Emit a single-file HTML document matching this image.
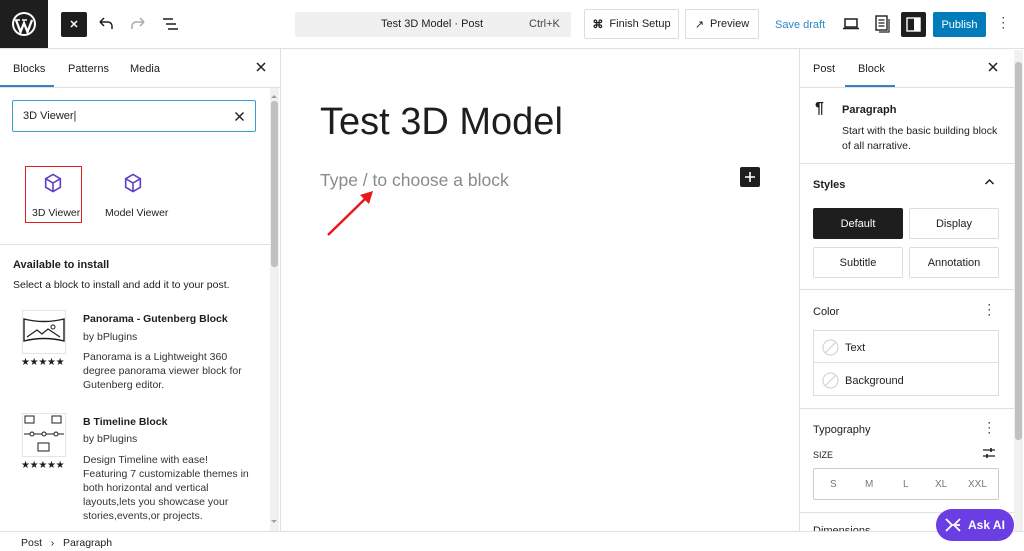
<!DOCTYPE html>
<html><head><meta charset="utf-8"><style>
*{box-sizing:border-box;margin:0;padding:0}
body{width:1024px;height:551px;overflow:hidden;background:#fff;font-family:"Liberation Sans",sans-serif;color:#1e1e1e;font-size:11px;position:relative}
.a{position:absolute}
.btn{position:absolute;border:1px solid #ddd;border-radius:2px;display:flex;align-items:center;justify-content:center;font-size:11px;color:#1e1e1e}
.hr{position:absolute;height:1px;background:#e0e0e0}
.b{font-weight:bold}
svg{position:absolute}
</style></head><body>
<!-- top bar -->
<div class="a" style="left:0;top:0;width:48px;height:48px;background:#1e1e1e"></div>
<svg style="left:11px;top:11px" width="26" height="26" viewBox="0 0 26 26"><circle cx="13" cy="13" r="12" fill="#fff"/><circle cx="13" cy="13" r="10" fill="#1e1e1e"/><path d="M5 9 L9.5 21 L13 12 L16.5 21 L21 9" stroke="#fff" stroke-width="2.3" fill="none"/><path d="M4 9h5M11 9h5" stroke="#fff" stroke-width="1.5"/></svg>
<div class="a" style="left:61px;top:12px;width:26px;height:25px;background:#1e1e1e;border-radius:2px"></div>
<svg style="left:67px;top:17px" width="14" height="14"><path d="M4 4l6 6M10 4l-6 6" stroke="#fff" stroke-width="1.5"/></svg>
<svg style="left:97px;top:16px" width="18" height="16"><path d="M3 6h8a4 4 0 0 1 4 4v3M3 6l4-4M3 6l4 4" stroke="#1e1e1e" stroke-width="1.5" fill="none"/></svg>
<svg style="left:129px;top:16px" width="18" height="16"><path d="M15 6H7a4 4 0 0 0-4 4v3M15 6l-4-4M15 6l-4 4" stroke="#aaa" stroke-width="1.5" fill="none"/></svg>
<svg style="left:162px;top:16px" width="18" height="16"><path d="M1 3h10M4 8h10M6 13h10" stroke="#1e1e1e" stroke-width="1.5"/></svg>
<div class="a" style="left:295px;top:12px;width:276px;height:25px;background:#f0f0f0;border-radius:2px"></div>
<div class="a" style="left:381px;top:18px;font-size:11px">Test 3D Model · Post</div>
<div class="a" style="left:529px;top:18px;font-size:11px;color:#444">Ctrl+K</div>
<div class="btn" style="left:584px;top:9px;width:95px;height:30px"><span style="font-weight:bold;margin-right:6px">⌘</span>Finish Setup</div>
<div class="btn" style="left:685px;top:9px;width:74px;height:30px"><span style="margin-right:6px">↗</span>Preview</div>
<div class="a" style="left:775px;top:19px;color:#2a8ac6">Save draft</div>
<svg style="left:842px;top:17px" width="18" height="14"><rect x="3" y="2" width="12" height="8" fill="none" stroke="#1e1e1e" stroke-width="1.5"/><path d="M1 11.5h16" stroke="#1e1e1e" stroke-width="1.5"/></svg>
<svg style="left:874px;top:14px" width="18" height="20"><rect x="2" y="2" width="11" height="14" fill="none" stroke="#1e1e1e" stroke-width="1.4"/><path d="M4.5 6h6M4.5 9h6M4.5 12h6M15 5v13H5" stroke="#1e1e1e" stroke-width="1.2" fill="none"/></svg>
<div class="a" style="left:901px;top:12px;width:25px;height:25px;background:#1e1e1e;border-radius:2px"></div>
<svg style="left:905px;top:16px" width="17" height="17"><rect x="2" y="2" width="13" height="13" fill="none" stroke="#fff" stroke-width="1.4"/><rect x="9" y="2" width="6" height="13" fill="#fff"/></svg>
<div class="a" style="left:933px;top:12px;width:53px;height:25px;background:#007cba;border-radius:2px;color:#fff;display:flex;align-items:center;justify-content:center">Publish</div>
<div class="a" style="left:1002px;top:16px;width:3px;line-height:5px;font-size:9px;font-weight:bold">·<br>·<br>·</div>
<div class="hr" style="left:0;top:48px;width:1024px"></div>
<!-- left panel -->
<div class="a" style="left:280px;top:48px;width:1px;height:483px;background:#e0e0e0"></div>
<div class="a" style="left:13px;top:63px">Blocks</div>
<div class="a" style="left:68px;top:63px">Patterns</div>
<div class="a" style="left:130px;top:63px">Media</div>
<div class="a" style="left:0;top:85px;width:54px;height:2px;background:#3582c4"></div>
<svg style="left:255px;top:61px" width="12" height="12"><path d="M2 2l8 8M10 2l-8 8" stroke="#1e1e1e" stroke-width="1.5"/></svg>
<div class="hr" style="left:0;top:87px;width:280px"></div>
<div class="a" style="left:270px;top:88px;width:9px;height:443px;background:#f1f1f1"></div>
<div class="a" style="left:271px;top:101px;width:7px;height:166px;background:#c1c1c1;border-radius:3px"></div>
<div class="a" style="left:271px;top:92px;width:0;height:0;border:3.5px solid transparent;border-bottom-color:#a0a0a0"></div>
<div class="a" style="left:271px;top:520px;width:0;height:0;border:3.5px solid transparent;border-top-color:#a0a0a0"></div>
<div class="a" style="left:12px;top:100px;width:244px;height:32px;border:1.5px solid #3a9bd5;border-radius:2px"></div>
<div class="a" style="left:23px;top:110px">3D Viewer|</div>
<svg style="left:234px;top:111px" width="11" height="11"><path d="M1.5 1.5l8 8M9.5 1.5l-8 8" stroke="#1e1e1e" stroke-width="1.4"/></svg>
<div class="a" style="left:25px;top:166px;width:57px;height:57px;border:1.5px solid #e01e1e"></div>
<svg style="left:42px;top:172px" width="22" height="22" viewBox="0 0 18 18"><path d="M9 2l6 3.5v7L9 16l-6-3.5v-7z M3 5.5L9 9l6-3.5M9 9v7" fill="none" stroke="#5b3ec8" stroke-width="1.3"/></svg>
<svg style="left:122px;top:172px" width="22" height="22" viewBox="0 0 18 18"><path d="M9 2l6 3.5v7L9 16l-6-3.5v-7z M3 5.5L9 9l6-3.5M9 9v7" fill="none" stroke="#5b3ec8" stroke-width="1.3"/></svg>
<div class="a" style="left:32px;top:207px;font-size:10.5px">3D Viewer</div>
<div class="a" style="left:105px;top:207px;font-size:10.5px">Model Viewer</div>
<div class="hr" style="left:0;top:244px;width:270px"></div>
<div class="a b" style="left:13px;top:259px">Available to install</div>
<div class="a" style="left:13px;top:279px;font-size:10.5px">Select a block to install and add it to your post.</div>
<div class="a" style="left:22px;top:310px;width:44px;height:44px;border:1px solid #e5e5e5"></div>
<svg style="left:22px;top:310px" width="44" height="44"><path d="M2 9q20 5 40 0v22q-20-5-40 0z" fill="none" stroke="#1e1e1e" stroke-width="1.4"/><path d="M5 27l10-7 5 4 6-5 12 8" fill="none" stroke="#1e1e1e" stroke-width="1.2"/><circle cx="31" cy="17" r="2" fill="none" stroke="#1e1e1e"/></svg>
<div class="a" style="left:21px;top:357px;font-size:10px;letter-spacing:-0.3px">★★★★★</div>
<div class="a b" style="left:83px;top:313px;font-size:10.5px">Panorama - Gutenberg Block</div>
<div class="a" style="left:83px;top:331px;font-size:10.5px;color:#333">by bPlugins</div>
<div class="a" style="left:83px;top:350px;font-size:10.5px;line-height:14px;color:#333;width:160px">Panorama is a Lightweight 360 degree panorama viewer block for Gutenberg editor.</div>
<div class="a" style="left:22px;top:413px;width:44px;height:44px;border:1px solid #e5e5e5"></div>
<svg style="left:22px;top:413px" width="44" height="44"><rect x="3" y="3" width="9" height="7" fill="none" stroke="#1e1e1e"/><rect x="30" y="3" width="9" height="7" fill="none" stroke="#1e1e1e"/><path d="M2 21h40" stroke="#1e1e1e"/><circle cx="10" cy="21" r="2" fill="#fff" stroke="#1e1e1e"/><circle cx="22" cy="21" r="2" fill="#fff" stroke="#1e1e1e"/><circle cx="34" cy="21" r="2" fill="#fff" stroke="#1e1e1e"/><rect x="16" y="30" width="11" height="8" fill="none" stroke="#1e1e1e"/></svg>
<div class="a" style="left:21px;top:460px;font-size:10px;letter-spacing:-0.3px">★★★★★</div>
<div class="a b" style="left:83px;top:416px;font-size:10.5px">B Timeline Block</div>
<div class="a" style="left:83px;top:433px;font-size:10.5px;color:#333">by bPlugins</div>
<div class="a" style="left:83px;top:453px;font-size:10.5px;line-height:14px;color:#333;width:170px">Design Timeline with ease! Featuring 7 customizable themes in both horizontal and vertical layouts,lets you showcase your stories,events,or projects.</div>
<!-- status -->
<div class="hr" style="left:0;top:531px;width:1024px"></div>
<div class="a" style="left:21px;top:537px;font-size:10.5px">Post &nbsp;&nbsp;›&nbsp;&nbsp; Paragraph</div>
<!-- editor -->
<div class="a" style="left:320px;top:101px;font-size:38px;color:#1e1e1e">Test 3D Model</div>
<div class="a" style="left:320px;top:170px;font-size:17.5px;color:#8a8a8a">Type / to choose a block</div>
<div class="a" style="left:740px;top:167px;width:20px;height:20px;background:#1e1e1e;border-radius:2px"></div>
<svg style="left:740px;top:167px" width="20" height="20"><path d="M10 5v10M5 10h10" stroke="#fff" stroke-width="1.6"/></svg>
<svg style="left:320px;top:185px" width="60" height="60"><path d="M8 50L47 12" stroke="#e8191b" stroke-width="2.5"/><path d="M53 6l-13 4 9 9z" fill="#e8191b"/></svg>
<!-- right panel -->
<div class="a" style="left:799px;top:48px;width:1px;height:483px;background:#e0e0e0"></div>
<div class="a" style="left:813px;top:63px">Post</div>
<div class="a" style="left:858px;top:63px">Block</div>
<div class="a" style="left:845px;top:85px;width:50px;height:2px;background:#3582c4"></div>
<svg style="left:987px;top:61px" width="12" height="12"><path d="M2 2l8 8M10 2l-8 8" stroke="#1e1e1e" stroke-width="1.5"/></svg>
<div class="hr" style="left:800px;top:87px;width:214px"></div>
<div class="a" style="left:1014px;top:50px;width:9px;height:481px;background:#f1f1f1"></div>
<div class="a" style="left:1015px;top:62px;width:7px;height:378px;background:#c1c1c1;border-radius:3px"></div>
<div class="a" style="left:815px;top:100px;font-size:16px;font-weight:bold">¶</div>
<div class="a b" style="left:842px;top:104px">Paragraph</div>
<div class="a" style="left:842px;top:124px;line-height:15px;width:165px;font-size:10.5px">Start with the basic building block of all narrative.</div>
<div class="hr" style="left:800px;top:163px;width:214px"></div>
<div class="a b" style="left:813px;top:179px">Styles</div>
<svg style="left:984px;top:178px" width="11" height="8"><path d="M1.5 6l4-4 4 4" stroke="#1e1e1e" stroke-width="1.5" fill="none"/></svg>
<div class="btn" style="left:813px;top:208px;width:90px;height:31px;background:#1e1e1e;color:#fff;border-color:#1e1e1e">Default</div>
<div class="btn" style="left:909px;top:208px;width:90px;height:31px">Display</div>
<div class="btn" style="left:813px;top:247px;width:90px;height:31px">Subtitle</div>
<div class="btn" style="left:909px;top:247px;width:90px;height:31px">Annotation</div>
<div class="hr" style="left:800px;top:289px;width:214px"></div>
<div class="a" style="left:813px;top:306px">Color</div>
<div class="a" style="left:988px;top:303px;line-height:5px;font-size:9px;font-weight:bold">·<br>·<br>·</div>
<div class="a" style="left:813px;top:330px;width:186px;height:66px;border:1px solid #ddd"></div>
<div class="hr" style="left:813px;top:362px;width:186px"></div>
<svg style="left:822px;top:339px" width="17" height="17"><circle cx="8.5" cy="8.5" r="7.5" fill="none" stroke="#ccc"/><path d="M3.5 13.5l10-10" stroke="#ccc"/></svg>
<svg style="left:822px;top:372px" width="17" height="17"><circle cx="8.5" cy="8.5" r="7.5" fill="none" stroke="#ccc"/><path d="M3.5 13.5l10-10" stroke="#ccc"/></svg>
<div class="a" style="left:845px;top:342px">Text</div>
<div class="a" style="left:845px;top:375px">Background</div>
<div class="hr" style="left:800px;top:408px;width:214px"></div>
<div class="a" style="left:813px;top:424px">Typography</div>
<div class="a" style="left:988px;top:421px;line-height:5px;font-size:9px;font-weight:bold">·<br>·<br>·</div>
<div class="a" style="left:813px;top:450px;font-size:9px;color:#1e1e1e">SIZE</div>
<svg style="left:982px;top:446px" width="14" height="14"><path d="M1 4h12M1 10h12" stroke="#1e1e1e" stroke-width="1.3"/><path d="M9 2v4M5 8v4" stroke="#1e1e1e" stroke-width="1.6"/></svg>
<div class="a" style="left:813px;top:468px;width:186px;height:32px;border:1px solid #ccc;border-radius:2px"></div>
<div class="a" style="left:830px;top:479px;color:#777;font-size:10px">S</div>
<div class="a" style="left:865px;top:479px;color:#777;font-size:10px">M</div>
<div class="a" style="left:903px;top:479px;color:#777;font-size:10px">L</div>
<div class="a" style="left:935px;top:479px;color:#777;font-size:10px">XL</div>
<div class="a" style="left:968px;top:479px;color:#777;font-size:10px">XXL</div>
<div class="hr" style="left:800px;top:512px;width:214px"></div>
<div class="a" style="left:813px;top:525px;height:6px;overflow:hidden">Dimensions</div>
<div class="a" style="left:936px;top:509px;width:78px;height:32px;background:#6a3ee3;border-radius:16px;color:#fff;font-weight:bold;font-size:12px;display:flex;align-items:center;padding-left:32px">Ask AI</div>
<svg style="left:944px;top:516px" width="18" height="18"><path d="M2 3l6 6-6 6M16 3l-6 6 6 6M8 9h8" stroke="#fff" stroke-width="1.8" fill="none"/></svg>
</body></html>
